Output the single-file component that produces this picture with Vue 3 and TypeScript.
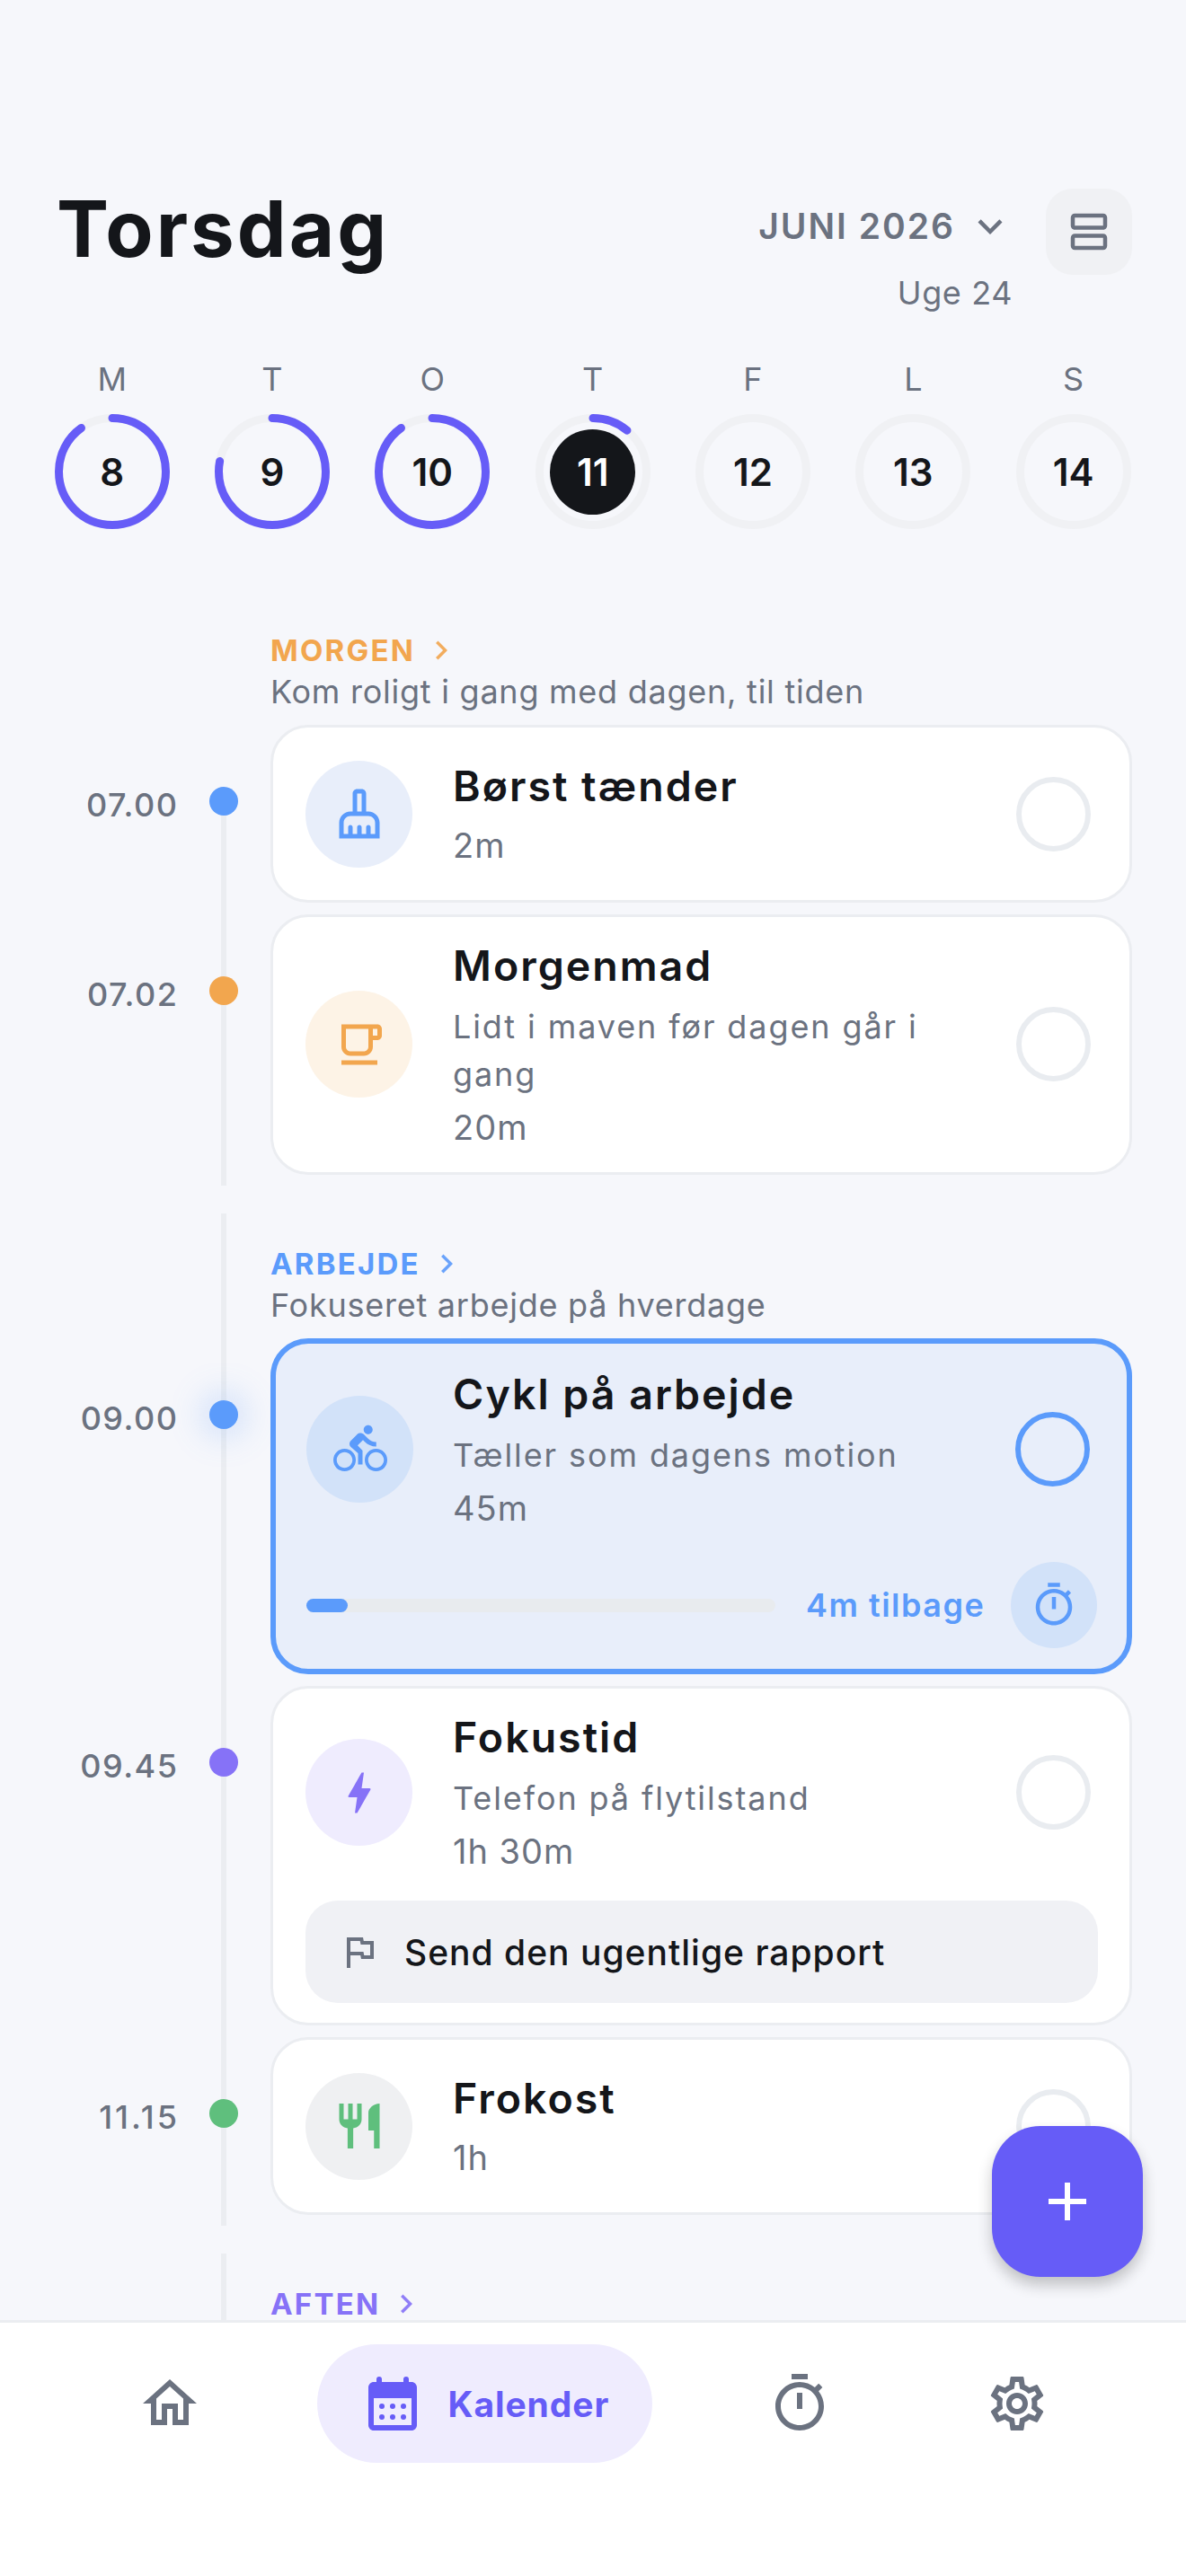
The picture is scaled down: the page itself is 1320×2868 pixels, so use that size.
<script setup lang="ts">
interface Day { letter: string; num: number; pct: number; today?: boolean }
const days: Day[] = [
  { letter: 'M', num: 8, pct: 0.9 },
  { letter: 'T', num: 9, pct: 0.78 },
  { letter: 'O', num: 10, pct: 0.9 },
  { letter: 'T', num: 11, pct: 0.11, today: true },
  { letter: 'F', num: 12, pct: 0 },
  { letter: 'L', num: 13, pct: 0 },
  { letter: 'S', num: 14, pct: 0 },
]
const R = 59.5
const C = 2 * Math.PI * R
const calendarDots = [
  [8, 13], [12, 13], [16, 13],
  [8, 17], [12, 17], [16, 17],
]
const icons = {
  broom: 'M16 11h-1V3c0-1.1-.9-2-2-2h-2c-1.1 0-2 .9-2 2v8H8c-2.76 0-5 2.24-5 5v7h18v-7c0-2.76-2.24-5-5-5zm-5-8h2v8h-2V3zm8 18h-2v-3c0-.55-.45-1-1-1s-1 .45-1 1v3h-2v-3c0-.55-.45-1-1-1s-1 .45-1 1v3H9v-3c0-.55-.45-1-1-1s-1 .45-1 1v3H5v-5c0-1.65 1.35-3 3-3h8c1.65 0 3 1.35 3 3v5z',
  mug: 'M4 19h16v2H4zM20 3H4v10c0 2.21 1.79 4 4 4h6c2.21 0 4-1.79 4-4v-3h2c1.11 0 2-.89 2-2V5c0-1.11-.89-2-2-2zm-4 10c0 1.1-.9 2-2 2H8c-1.1 0-2-.9-2-2V5h10v8zm4-5h-2V5h2v3z',
  bike: 'M15.5 5.5c1.1 0 2-.9 2-2s-.9-2-2-2-2 .9-2 2 .9 2 2 2zM5 12c-2.8 0-5 2.2-5 5s2.2 5 5 5 5-2.2 5-5-2.2-5-5-5zm0 8.5c-1.9 0-3.5-1.6-3.5-3.5s1.6-3.5 3.5-3.5 3.5 1.6 3.5 3.5-1.6 3.5-3.5 3.5zm5.8-10l2.4-2.4.8.8c1.3 1.3 3 2.1 5.1 2.1V9c-1.5 0-2.7-.6-3.6-1.5l-1.9-1.9c-.5-.4-1-.6-1.6-.6s-1.1.2-1.4.6L7.8 8.4c-.4.4-.6.9-.6 1.4 0 .6.2 1.1.6 1.4L11 14v5h2v-6.2l-2.2-2.3zM19 12c-2.8 0-5 2.2-5 5s2.2 5 5 5 5-2.2 5-5-2.2-5-5-5zm0 8.5c-1.9 0-3.5-1.6-3.5-3.5s1.6-3.5 3.5-3.5 3.5 1.6 3.5 3.5-1.6 3.5-3.5 3.5z',
  bolt: 'M11 21h-1l1-7H7.5c-.58 0-.57-.32-.38-.66.19-.34.05-.08.07-.12C8.48 10.94 10.42 7.54 13 3h1l-1 7h3.5c.49 0 .56.33.47.51l-.07.15C12.96 17.55 11 21 11 21z',
  food: 'M11 9H9V2H7v7H5V2H3v7c0 2.12 1.66 3.84 3.75 3.97V22h2.5v-9.03C11.34 12.84 13 11.12 13 9V2h-2v7zm5-3v8h2.5v8H21V2c-2.76 0-5 2.24-5 4z',
  timer: 'M15 1H9v2h6V1zm-4 13h2V8h-2v6zm8.03-6.61l1.42-1.42c-.43-.51-.9-.99-1.41-1.41l-1.42 1.42C16.07 4.74 14.12 4 12 4c-4.97 0-9 4.03-9 9s4.02 9 9 9 9-4.03 9-9c0-2.12-.74-4.07-1.97-5.61zM12 20c-3.87 0-7-3.13-7-7s3.13-7 7-7 7 3.13 7 7-3.13 7-7 7z',
  flag: 'M12.36 6l.4 2H18v6h-3.36l-.4-2H7V6h5.36M14 4H5v17h2v-7h5.6l.4 2h7V6h-5.6L14 4z',
  home: 'M12 5.69l5 4.5V18h-2v-6H9v6H7v-7.81l5-4.5M12 3L2 12h3v8h6v-6h2v6h6v-8h3L12 3z',
  calendar: 'M5 4h1V3a1 1 0 0 1 2 0v1h8V3a1 1 0 0 1 2 0v1h1c1.1 0 2 .9 2 2v14c0 1.1-.9 2-2 2H5c-1.1 0-2-.9-2-2V6c0-1.1.9-2 2-2zM5 10v10h14V10z',
  gear: 'M19.43 12.98c.04-.32.07-.64.07-.98 0-.34-.03-.66-.07-.98l2.11-1.65c.19-.15.24-.42.12-.64l-2-3.46c-.09-.16-.26-.25-.44-.25-.06 0-.12.01-.17.03l-2.49 1c-.52-.4-1.08-.73-1.69-.98l-.38-2.65C14.46 2.18 14.25 2 14 2h-4c-.25 0-.46.18-.49.42l-.38 2.65c-.61.25-1.17.59-1.69.98l-2.49-1c-.06-.02-.12-.03-.18-.03-.17 0-.34.09-.43.25l-2 3.46c-.13.22-.07.49.12.64l2.11 1.65c-.04.32-.07.65-.07.98 0 .33.03.66.07.98l-2.11 1.65c-.19.15-.24.42-.12.64l2 3.46c.09.16.26.25.44.25.06 0 .12-.01.17-.03l2.49-1c.52.4 1.08.73 1.69.98l.38 2.65c.03.24.24.42.49.42h4c.25 0 .46-.18.49-.42l.38-2.65c.61-.25 1.17-.59 1.69-.98l2.49 1c.06.02.12.03.18.03.17 0 .34-.09.43-.25l2-3.46c.12-.22.07-.49-.12-.64l-2.11-1.65zm-1.98-1.71c.04.31.05.52.05.73 0 .21-.02.43-.05.73l-.14 1.13.89.7 1.08.84-.7 1.21-1.27-.51-1.04-.42-.9.68c-.43.32-.84.56-1.25.73l-1.06.43-.16 1.13-.2 1.35h-1.4l-.19-1.35-.16-1.13-1.06-.43c-.43-.18-.83-.41-1.23-.71l-.91-.7-1.06.43-1.27.51-.7-1.21 1.08-.84.89-.7-.14-1.13c-.03-.31-.05-.54-.05-.74s.02-.43.05-.73l.14-1.13-.89-.7-1.08-.84.7-1.21 1.27.51 1.04.42.9-.68c.43-.32.84-.56 1.25-.73l1.06-.43.16-1.13.2-1.35h1.39l.19 1.35.16 1.13 1.06.43c.43.18.83.41 1.23.71l.91.7 1.06-.43 1.27-.51.7 1.21-1.07.85-.89.7.14 1.13zM12 8c-2.21 0-4 1.79-4 4s1.79 4 4 4 4-1.79 4-4-1.79-4-4-4zm0 6c-1.1 0-2-.9-2-2s.9-2 2-2 2 .9 2 2-.9 2-2 2z',
  agenda: 'M19 5v4H5V5h14m0-2H5c-1.1 0-2 .9-2 2v4c0 1.1.9 2 2 2h14c1.1 0 2-.9 2-2V5c0-1.1-.9-2-2-2zm0 12v4H5v-4h14m0-2H5c-1.1 0-2 .9-2 2v4c0 1.1.9 2 2 2h14c1.1 0 2-.9 2-2v-4c0-1.1-.9-2-2-2z',
  down: 'M7.41 8.59L12 13.17l4.59-4.58L18 10l-6 6-6-6 1.41-1.41z',
  right: 'M10 6L8.59 7.41 13.17 12l-4.58 4.59L10 18l6-6z',
}
</script>

<template>
  <div class="screen">
    <main class="scroll">
      <header class="top">
        <h1 class="title">Torsdag</h1>
        <div class="top-right">
          <div class="month-col">
            <div class="month">
              <span>JUNI 2026</span>
              <svg class="down" viewBox="0 0 24 24"><path :d="icons.down" /></svg>
            </div>
            <div class="week">Uge 24</div>
          </div>
          <div class="view-btn"><svg class="i54" viewBox="0 0 24 24"><path :d="icons.agenda" /></svg></div>
        </div>
      </header>

      <div class="strip">
        <div v-for="d in days" :key="d.num" class="day">
          <div class="letter">{{ d.letter }}</div>
          <div class="ring-wrap">
            <svg class="ring" viewBox="0 0 128 128">
              <circle cx="64" cy="64" :r="R" class="ring-bg" />
              <circle
                v-if="d.pct > 0"
                cx="64"
                cy="64"
                :r="R"
                class="ring-fg"
                :stroke-dasharray="`${C * d.pct} ${C}`"
              />
            </svg>
            <div class="num" :class="{ today: d.today }">{{ d.num }}</div>
          </div>
        </div>
      </div>

      <section class="section first">
        <div class="head c-orange">
          <span class="head-label">MORGEN</span>
          <svg class="chev" viewBox="0 0 24 24"><path :d="icons.right" /></svg>
        </div>
        <div class="head-sub">Kom roligt i gang med dagen, til tiden</div>
        <div class="rows">
          <div class="row">
            <div class="time">07.00</div>
            <div class="dot bg-blue"></div>
            <div class="card">
              <div class="card-main">
                <div class="ico ico-blue"><svg class="i60" viewBox="0 0 24 24"><path :d="icons.broom" /></svg></div>
                <div class="body">
                  <div class="name">Børst tænder</div>
                  <div class="meta">2m</div>
                </div>
                <div class="check"></div>
              </div>
            </div>
          </div>
          <div class="row">
            <div class="time">07.02</div>
            <div class="dot bg-orange"></div>
            <div class="card">
              <div class="card-main">
                <div class="ico ico-orange"><svg class="i60" viewBox="0 0 24 24"><path :d="icons.mug" /></svg></div>
                <div class="body">
                  <div class="name">Morgenmad</div>
                  <div class="desc">Lidt i maven før dagen går i gang</div>
                  <div class="meta">20m</div>
                </div>
                <div class="check"></div>
              </div>
            </div>
          </div>
        </div>
      </section>

      <section class="section">
        <div class="head c-blue">
          <span class="head-label">ARBEJDE</span>
          <svg class="chev" viewBox="0 0 24 24"><path :d="icons.right" /></svg>
        </div>
        <div class="head-sub">Fokuseret arbejde på hverdage</div>
        <div class="rows">
          <div class="row">
            <div class="time">09.00</div>
            <div class="dot bg-blue glow"></div>
            <div class="card active">
              <div class="card-main">
                <div class="ico ico-active"><svg class="i60" viewBox="0 0 24 24"><path :d="icons.bike" /></svg></div>
                <div class="body">
                  <div class="name">Cykl på arbejde</div>
                  <div class="desc">Tæller som dagens motion</div>
                  <div class="meta">45m</div>
                </div>
                <div class="check check-active"></div>
              </div>
              <div class="progress-row">
                <div class="track"><div class="fill"></div></div>
                <div class="left-text">4m tilbage</div>
                <div class="timer-btn"><svg class="i54" viewBox="0 0 24 24"><path :d="icons.timer" /></svg></div>
              </div>
            </div>
          </div>
          <div class="row">
            <div class="time">09.45</div>
            <div class="dot bg-purple"></div>
            <div class="card">
              <div class="card-main">
                <div class="ico ico-purple"><svg class="i60" viewBox="0 0 24 24"><path :d="icons.bolt" /></svg></div>
                <div class="body">
                  <div class="name">Fokustid</div>
                  <div class="desc">Telefon på flytilstand</div>
                  <div class="meta">1h 30m</div>
                </div>
                <div class="check"></div>
              </div>
              <div class="subtask">
                <svg class="i48" viewBox="0 0 24 24"><path :d="icons.flag" /></svg>
                <span>Send den ugentlige rapport</span>
              </div>
            </div>
          </div>
          <div class="row">
            <div class="time time-ones">11.15</div>
            <div class="dot bg-green"></div>
            <div class="card">
              <div class="card-main">
                <div class="ico ico-green"><svg class="i60" viewBox="0 0 24 24"><path :d="icons.food" /></svg></div>
                <div class="body">
                  <div class="name">Frokost</div>
                  <div class="meta">1h</div>
                </div>
                <div class="check"></div>
              </div>
            </div>
          </div>
        </div>
      </section>

      <section class="section">
        <div class="head c-purple">
          <span class="head-label">AFTEN</span>
          <svg class="chev" viewBox="0 0 24 24"><path :d="icons.right" /></svg>
        </div>
      </section>
    </main>

    <button class="fab" type="button">
      <svg viewBox="0 0 42 42" class="plus"><path d="M21 0v42M0 21h42" /></svg>
    </button>

    <nav class="nav">
      <div class="nav-item"><svg class="i72" viewBox="0 0 24 24"><path :d="icons.home" /></svg></div>
      <div class="nav-pill">
        <svg class="i72" viewBox="0 0 24 24">
          <path :d="icons.calendar" fill-rule="evenodd" />
          <circle v-for="p in calendarDots" :key="p.join()" :cx="p[0]" :cy="p[1]" r="1" />
        </svg>
        <span>Kalender</span>
      </div>
      <div class="nav-item"><svg class="i72" viewBox="0 0 24 24"><path :d="icons.timer" /></svg></div>
      <div class="nav-item"><svg class="i72" viewBox="0 0 24 24"><path :d="icons.gear" /></svg></div>
    </nav>
  </div>
</template>

<style scoped>
.screen {
  position: relative;
  width: 1320px;
  height: 2868px;
  overflow: hidden;
  display: flex;
  flex-direction: column;
  background: #f6f7fb;
  font-family: Inter, "Noto Sans", sans-serif;
  color: #14161a;
}
svg { display: block; fill: currentColor; flex: none; }
.i48 { width: 48px; height: 48px; }
.i54 { width: 54px; height: 54px; }
.i60 { width: 60px; height: 60px; }
.i72 { width: 72px; height: 72px; }

.scroll {
  flex: 1;
  min-height: 0;
  padding-top: 210px;
}
.top {
  display: flex;
  justify-content: space-between;
  align-items: flex-start;
  padding: 0 60px 0 63px;
}
.title {
  margin: -5px 0 0;
  font-size: 87px;
  line-height: 100px;
  font-weight: 700;
  letter-spacing: 3px;
}
.top-right { display: flex; gap: 38px; align-items: flex-start; }
.month-col { display: flex; flex-direction: column; align-items: flex-end; padding-top: 18px; }
.month {
  display: flex;
  align-items: center;
  gap: 12px;
  height: 48px;
  font-size: 39px;
  line-height: 48px;
  font-weight: 600;
  letter-spacing: 2px;
  color: #6b7280;
}
.down { width: 54px; height: 54px; margin-right: -3px; }
.week {
  margin-top: 28px;
  margin-right: -1px;
  font-size: 36px;
  line-height: 44px;
  letter-spacing: .6px;
  color: #6b7280;
}
.view-btn {
  width: 96px;
  height: 96px;
  border-radius: 30px;
  background: #f0f1f4;
  color: #6b7280;
  display: flex;
  align-items: center;
  justify-content: center;
}

.strip {
  display: grid;
  grid-template-columns: repeat(7, 178.33px);
  padding-left: 35.5px;
  margin-top: 52px;
}
.day { display: flex; flex-direction: column; align-items: center; gap: 17px; }
.letter { font-size: 36px; line-height: 44px; color: #6b7280; }
.ring-wrap {
  position: relative;
  width: 128px;
  height: 128px;
  display: flex;
  align-items: center;
  justify-content: center;
}
.ring { position: absolute; inset: 0; width: 128px; height: 128px; transform: rotate(-90deg); }
.ring-bg { fill: none; stroke: #f0f1f4; stroke-width: 9; }
.ring-fg { fill: none; stroke: #665cf7; stroke-width: 9; stroke-linecap: round; }
.num {
  position: relative;
  width: 95px;
  height: 95px;
  border-radius: 50%;
  display: flex;
  align-items: center;
  justify-content: center;
  font-size: 42px;
  font-weight: 600;
  color: #14161a;
}
.num.today { background: #14161a; color: #fff; }

.section { position: relative; padding: 37px 0 12px; margin-bottom: 31px; }
.section::before {
  content: "";
  position: absolute;
  left: 246px;
  top: 0;
  bottom: 0;
  width: 6px;
  background: #ebedf1;
}
.section.first { margin-top: 79px; }
.section.first::before { top: 208px; }
.head {
  margin-left: 301px;
  height: 38px;
  display: flex;
  align-items: center;
  gap: 8px;
  font-size: 33px;
  line-height: 38px;
  font-weight: 700;
  letter-spacing: 2.2px;
}
.chev { width: 42px; height: 42px; margin: -2px 0; opacity: .9; }
.c-orange { color: #f2a64e; }
.c-blue { color: #5b9bfb; }
.c-purple { color: #8672f7; }
.head-sub {
  margin: 3px 0 0 301px;
  font-size: 36px;
  line-height: 48px;
  letter-spacing: .75px;
  color: #6b7280;
}
.rows { display: flex; flex-direction: column; gap: 13px; margin-top: 13px; }
.row { position: relative; display: flex; align-items: flex-start; }
.time {
  width: 198.5px;
  margin-right: -1.5px;
  text-align: right;
  flex: none;
  margin-top: 67px;
  font-size: 36px;
  line-height: 44px;
  font-weight: 500;
  letter-spacing: 1.5px;
  color: #6b7280;
}
.time-ones { letter-spacing: 3px; width: 200px; margin-right: -3px; }
.dot {
  position: relative;
  width: 32px;
  height: 32px;
  flex: none;
  border-radius: 50%;
  margin: 69px 36px 0;
}
.glow { box-shadow: 0 0 36px 8px rgba(91,155,251,.26); }
.bg-blue { background: #5b9bfb; }
.bg-orange { background: #f2a64e; }
.bg-purple { background: #8672f7; }
.bg-green { background: #5fbf7d; }

.card {
  box-sizing: border-box;
  width: 959px;
  flex: none;
  background: #fff;
  border: 3px solid #ebedf1;
  border-radius: 42px;
  padding: 24px 43px 24px 36px;
}
.card.active {
  background: #e8eefa;
  border: 6px solid #5b9bfb;
  padding: 26px 41px 23px 34px;
}
.card-main { display: flex; align-items: center; min-height: 144px; }
.ico {
  width: 119px;
  height: 119px;
  border-radius: 50%;
  flex: none;
  display: flex;
  align-items: center;
  justify-content: center;
}
.ico-blue { background: #e8eefa; color: #5b9bfb; }
.ico-orange { background: #fdf3e6; color: #f2a64e; }
.ico-active { background: #d2e2f9; color: #5b9bfb; }
.ico-purple { background: #efecfe; color: #8672f7; }
.ico-green { background: #eff0f2; color: #5fbf7d; }
.body { flex: 1; min-width: 0; margin: 0 47px 0 45px; }
.active .body { margin-left: 44px; }
.name {
  margin: -1px 0 9.5px;
  font-size: 46.5px;
  line-height: 63.5px;
  font-weight: 600;
  letter-spacing: 2px;
}
.desc {
  margin-top: 2.5px;
  font-size: 36px;
  line-height: 53px;
  letter-spacing: 1.9px;
  color: #6b7280;
}
.meta {
  margin-top: 8px;
  font-size: 38px;
  line-height: 49.7px;
  letter-spacing: 1px;
  color: #6b7280;
}
.check {
  box-sizing: border-box;
  width: 83px;
  height: 83px;
  border-radius: 50%;
  border: 6px solid #e9ecf0;
  flex: none;
}
.check-active { border-color: #5b9bfb; }

.progress-row { display: flex; align-items: center; margin: 35px -7px 0 0; }
.track { width: 522px; height: 15px; border-radius: 8px; background: #e8ebee; flex: none; }
.fill { width: 46px; height: 100%; border-radius: 8px; background: #5b9bfb; }
.left-text {
  margin-left: 34px;
  width: 228px;
  flex: none;
  font-size: 36px;
  font-weight: 600;
  letter-spacing: 1.5px;
  color: #5b9bfb;
  white-space: nowrap;
}
.timer-btn {
  width: 96px;
  height: 96px;
  border-radius: 50%;
  background: #d2e2f9;
  color: #5b9bfb;
  display: flex;
  align-items: center;
  justify-content: center;
  flex: none;
}
.subtask {
  box-sizing: border-box;
  width: 882px;
  height: 114px;
  margin: 29px 0 -2px;
  padding: 0 36px;
  border-radius: 36px;
  background: #f0f1f5;
  display: flex;
  align-items: center;
  gap: 26px;
  font-size: 39px;
  font-weight: 500;
  letter-spacing: 1px;
}
.subtask svg { color: #6b7280; }

.fab {
  position: absolute;
  left: 1104px;
  top: 2367px;
  width: 168px;
  height: 168px;
  padding: 0;
  border: 0;
  border-radius: 54px;
  background: #665cf7;
  box-shadow: 0 9px 16px rgba(20,22,26,.24);
  display: flex;
  align-items: center;
  justify-content: center;
}
.plus { width: 42px; height: 42px; fill: none; stroke: #fff; stroke-width: 6; }

.nav {
  position: relative;
  box-sizing: border-box;
  height: 285px;
  flex: none;
  background: #fff;
  border-top: 3px solid #ebedf1;
  padding: 24px 0 0 110.5px;
  display: flex;
  align-items: flex-start;
  gap: 86px;
  color: #6b7280;
}
.nav-item {
  width: 156px;
  height: 132px;
  display: flex;
  align-items: center;
  justify-content: center;
}
.nav-pill {
  box-sizing: border-box;
  width: 373px;
  height: 132px;
  flex: none;
  padding-left: 48px;
  border-radius: 66px;
  background: #efecfe;
  color: #665cf7;
  display: flex;
  align-items: center;
  gap: 26px;
  font-size: 39px;
  font-weight: 700;
  letter-spacing: .9px;
}
</style>
